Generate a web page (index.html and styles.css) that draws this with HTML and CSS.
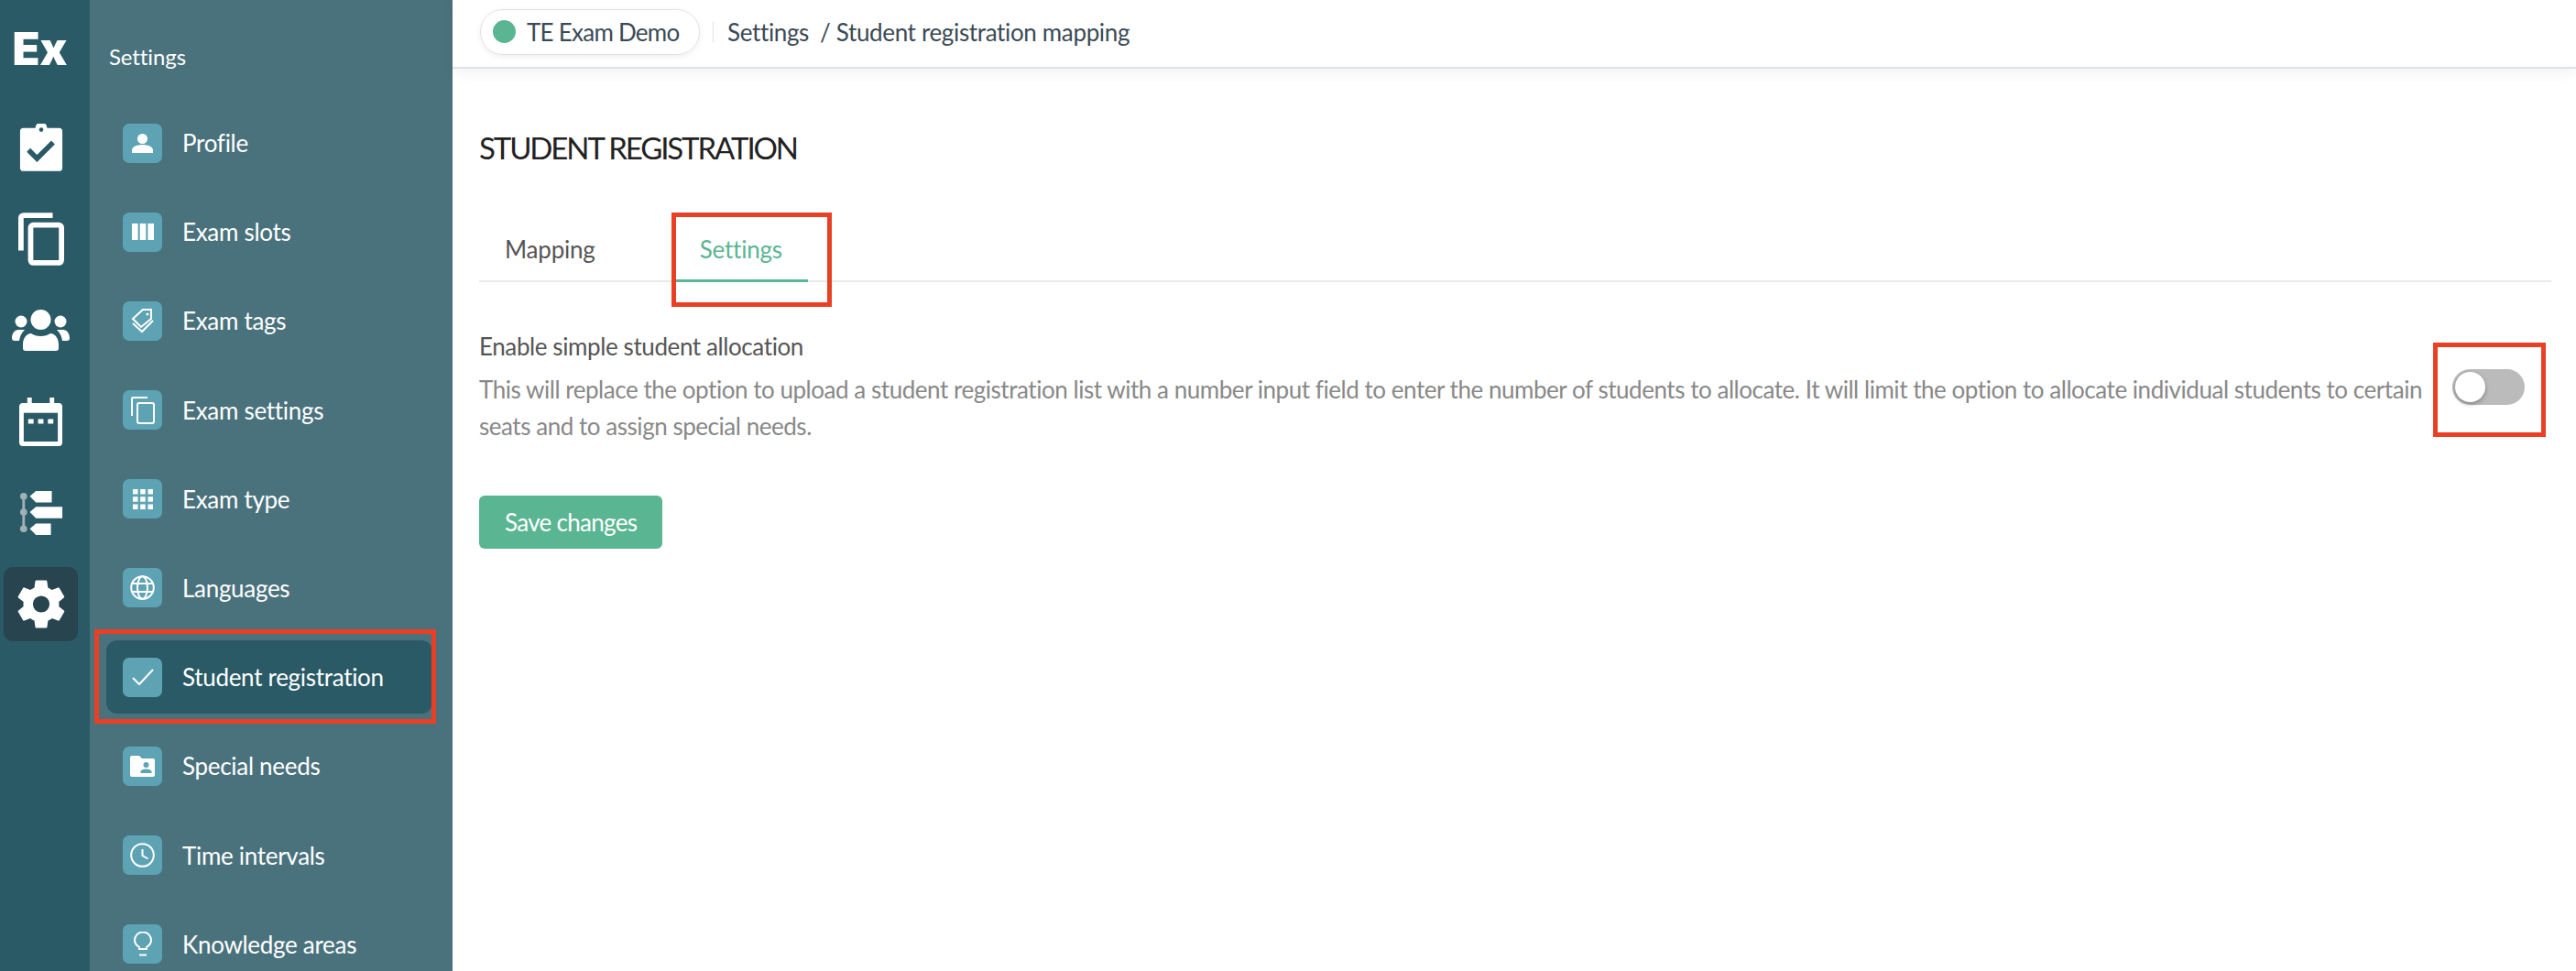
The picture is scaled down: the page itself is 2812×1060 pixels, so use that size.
FILE: index.html
```html
<!DOCTYPE html>
<html lang="en">
<head>
<meta charset="utf-8">
<title>Student registration</title>
<link rel="stylesheet" href="styles.css">
</head>
<body>
<div class="app">
  <nav class="rail">
    <div class="logo">Ex</div>
    <a class="rail-item"><svg width="48" height="52" viewBox="0 0 52 56"><path fill="#fff" d="M5 5h14a7 7 0 0 1 14 0h14a4 4 0 0 1 4 4v43a4 4 0 0 1-4 4H5a4 4 0 0 1-4-4V9a4 4 0 0 1 4-4z"/><circle cx="26" cy="7" r="2.5" fill="#2a5a66"/><path fill="none" stroke="#2a5a66" stroke-width="6" d="M11 31l10 10 19-19"/></svg></a>
    <a class="rail-item"><svg width="50" height="58" viewBox="0 0 52 60"><path fill="none" stroke="#fff" stroke-width="6" d="M3 43V6a3 3 0 0 1 3-3h33"/><rect x="14" y="14" width="35" height="43" rx="3" fill="none" stroke="#fff" stroke-width="6"/></svg></a>
    <a class="rail-item"><svg width="63" height="45" viewBox="0 0 63 45"><circle cx="31.500" cy="11" r="11" fill="#fff"/><circle cx="10" cy="13" r="6.500" fill="#fff"/><circle cx="53" cy="13" r="6.500" fill="#fff"/><path fill="#fff" d="M12 38c0-7 4-12 9-12 3 2 6 3 10.500 3s7.500-1 10.500-3c5 0 9 5 9 12v4a3 3 0 0 1-3 3H15a3 3 0 0 1-3-3z"/><path fill="#fff" d="M0 31c0-5 3-9 7-9h7c-3 3-5 6-6 12H3a3 3 0 0 1-3-3zM63 31c0-5-3-9-7-9h-7c3 3 5 6 6 12h5a3 3 0 0 0 3-3z"/></svg></a>
    <a class="rail-item"><svg width="47" height="53" viewBox="0 0 48 54"><path fill="#fff" d="M9 0h5v6h20V0h5v6h5a4 4 0 0 1 4 4v40a4 4 0 0 1-4 4H4a4 4 0 0 1-4-4V10a4 4 0 0 1 4-4h5z"/><rect x="5" y="17" width="38" height="32" fill="#2a5a66"/><path fill="#fff" d="M10 24h6v5h-6zM21 24h6v5h-6zM32 24h6v5h-6z"/></svg></a>
    <a class="rail-item"><svg width="48" height="50" viewBox="0 0 50 52"><path stroke="#9fb0b7" stroke-width="3" d="M5 6v40"/><circle cx="5" cy="7" r="4" fill="#9fb0b7"/><circle cx="5" cy="25" r="4" fill="#9fb0b7"/><circle cx="5" cy="44" r="4" fill="#9fb0b7"/><path fill="#fff" d="M12 7l7-6h18v13H19zM12 25l7-6h30v13H19zM12 44l7-6h17v13H19z"/></svg></a>
    <a class="rail-item rail-active"><svg width="52" height="53" viewBox="2 2 20 20"><path fill="#fff" d="M19.4 13c.04-.33.1-.66.1-1s-.06-.67-.1-1l2.1-1.65c.2-.15.25-.42.13-.64l-2-3.46c-.12-.22-.4-.3-.6-.22l-2.5 1c-.52-.4-1.08-.73-1.7-.98L14.45 2.400A.5.5 0 0 0 14 2h-4a.5.5 0 0 0-.5.42l-.38 2.65c-.6.25-1.17.58-1.7.98l-2.48-1c-.22-.08-.49 0-.61.22l-2 3.46c-.13.22-.07.49.12.64L4.56 11c-.04.33-.06.66-.06 1s.02.67.06 1l-2.11 1.65c-.19.15-.25.42-.12.64l2 3.46c.12.22.39.3.61.22l2.49-1c.52.4 1.08.73 1.69.98l.38 2.65c.03.24.24.42.49.42h4c.25 0 .46-.18.5-.42l.37-2.65c.62-.25 1.18-.58 1.7-.98l2.49 1c.22.08.49 0 .61-.22l2-3.46c.12-.22.07-.49-.12-.64L19.4 13zM12 15.500a3.500 3.500 0 1 1 0-7 3.500 3.500 0 0 1 0 7z"/></svg></a>
  </nav>
  <aside class="panel">
    <div class="panel-title">Settings</div>
    <ul class="menu">
      <li class="menu-item"><span class="menu-icon"><svg width="23" height="21" viewBox="0 0 23 21"><circle cx="11.500" cy="5.500" r="5.500" fill="#fff"/><path fill="#fff" d="M0 21v-3c0-4 6-6 11.500-6S23 14 23 18v3z"/></svg></span>Profile</li>
      <li class="menu-item"><span class="menu-icon"><svg width="24" height="18" viewBox="0 0 24 18"><path fill="#fff" d="M0 0h6.600v18H0zM8.700 0h6.600v18H8.700zM17.400 0H24v18h-6.600z"/></svg></span>Exam slots</li>
      <li class="menu-item"><span class="menu-icon"><svg width="25" height="28" viewBox="0 0 25 28"><path fill="none" stroke="#fff" stroke-width="2" d="M2 12L13 2h9v10L11 21z"/><circle cx="18" cy="7" r="1.500" fill="#fff"/><path fill="none" stroke="#fff" stroke-width="2" d="M2 17l10 9 12-12"/></svg></span>Exam tags</li>
      <li class="menu-item"><span class="menu-icon"><svg width="26" height="30" viewBox="0 0 26 30"><path fill="none" stroke="#fff" stroke-width="2" d="M1 21V2a1 1 0 0 1 1-1h16"/><rect x="7" y="7" width="18" height="22" rx="2" fill="none" stroke="#fff" stroke-width="2"/></svg></span>Exam settings</li>
      <li class="menu-item"><span class="menu-icon"><svg width="22" height="22" viewBox="0 0 22 22"><path fill="#fff" d="M0 0h5.500v5.500H0zM8.200 0h5.500v5.500H8.200zM16.500 0H22v5.500h-5.500zM0 8.200h5.500v5.500H0zM8.200 8.200h5.500v5.500H8.200zM16.500 8.200H22v5.500h-5.500zM0 16.500h5.500V22H0zM8.200 16.500h5.500V22H8.200zM16.500 16.500H22V22h-5.500z"/></svg></span>Exam type</li>
      <li class="menu-item"><span class="menu-icon"><svg width="27" height="27" viewBox="0 0 27 27" fill="none" stroke="#fff" stroke-width="2"><circle cx="13.500" cy="13.500" r="12.300"/><ellipse cx="13.500" cy="13.500" rx="5.500" ry="12.300"/><path d="M2 9h23M2 18h23"/></svg></span>Languages</li>
      <li class="menu-item menu-active"><span class="menu-icon"><svg width="24" height="18" viewBox="0 0 24 18"><path fill="none" stroke="#fff" stroke-width="2" d="M1 10l7 7L23 1"/></svg></span>Student registration</li>
      <li class="menu-item"><span class="menu-icon"><svg width="27" height="23" viewBox="0 0 27 23"><path fill="#fff" d="M2 0h8l3 3h12a2 2 0 0 1 2 2v16a2 2 0 0 1-2 2H2a2 2 0 0 1-2-2V2a2 2 0 0 1 2-2z"/><circle cx="17.500" cy="10" r="3" fill="#5ea3b3"/><path fill="#5ea3b3" d="M11.500 19v-1.500c0-2 3-3 6-3s6 1 6 3V19z"/></svg></span>Special needs</li>
      <li class="menu-item"><span class="menu-icon"><svg width="27" height="27" viewBox="0 0 27 27" fill="none" stroke="#fff" stroke-width="2"><circle cx="13.500" cy="13.500" r="12.300"/><path d="M13.500 7v7l6 3.500"/></svg></span>Time intervals</li>
      <li class="menu-item"><span class="menu-icon"><svg width="20" height="27" viewBox="0 0 20 27" fill="none" stroke="#fff" stroke-width="2"><path d="M6 19v-2c-3-2-5-4-5-7.500a9 9 0 0 1 18 0c0 3.500-2 5.500-5 7.500v2z"/><path d="M6 25.500h8"/></svg></span>Knowledge areas</li>
    </ul>
  </aside>
  <main class="main">
    <header class="topbar">
      <div class="pill"><span class="dot"></span>TE Exam Demo</div>
      <span class="vsep"></span>
      <div class="crumbs"><span>Settings</span><span>/ Student registration mapping</span></div>
    </header>
    <section class="content">
      <h1 class="title">STUDENT REGISTRATION</h1>
      <div class="tabs">
        <div class="tab">Mapping</div>
        <div class="tab tab-active">Settings</div>
      </div>
      <div class="option">
        <div class="option-text">
          <div class="option-label">Enable simple student allocation</div>
          <p class="option-desc">This will replace the option to upload a student registration list with a number input field to enter the number of students to allocate. It will limit the option to allocate individual students to certain seats and to assign special needs.</p>
        </div>
        <div class="toggle"><span class="knob"></span></div>
      </div>
      <button class="save">Save changes</button>
    </section>
  </main>
</div>
<div class="mark mark-menu"></div>
<div class="mark mark-tab"></div>
<div class="mark mark-toggle"></div>
</body>
</html>
```
FILE: styles.css
```css
* { box-sizing: border-box; }
html, body { margin: 0; height: 100%; }
body { font-family: Lato, "Open Sans", sans-serif; background: #fff; overflow: hidden; position: relative; }
.app { display: flex; height: 1060px; overflow: hidden; }

.rail { width: 98px; flex: none; background: #2a5a66; display: flex; flex-direction: column; align-items: center; padding: 27px 9px 0 0; gap: 18.6px; }
.logo { height: 54px; margin: 0 2px 21.4px 0; font: 900 49px/54px Inter, Lato, sans-serif; color: #fff; }
.rail-item { width: 81px; height: 81px; flex: none; display: flex; align-items: center; justify-content: center; border-radius: 10px; }
.rail-active { background: #27444f; }

.panel { width: 396px; flex: none; background: #4a727d; color: #fff; padding-left: 22px; }
.panel-title { font-size: 24px; line-height: 30px; padding-top: 47px; height: 116px; margin-left: -1px; letter-spacing: -0.1px; }
.menu { list-style: none; margin: 0 22px 0 -4px; padding: 0; display: flex; flex-direction: column; gap: 17.2px; }
.menu-item { height: 80px; flex: none; display: flex; align-items: center; gap: 22px; padding-left: 18px; font-size: 26px; letter-spacing: -0.3px; border-radius: 12px; white-space: nowrap; }
.menu-active { background: #2a5a66; }
.menu-icon { width: 43px; height: 43px; flex: none; border-radius: 7px; background: #5ea3b3; display: flex; align-items: center; justify-content: center; }

.main { flex: 1; min-width: 0; }
.topbar { height: 75px; border-bottom: 2px solid #dde3e8; box-shadow: 0 5px 14px rgba(0,0,0,.05); display: flex; align-items: center; padding: 0 0 4px 30px; color: #3a4a55; font-size: 26px; }
.pill { width: 240px; height: 50px; flex: none; border: 1px solid #dfe3e4; border-radius: 25px; box-shadow: 0 2px 6px rgba(0,0,0,.07); display: flex; align-items: center; gap: 12px; padding-left: 13px; letter-spacing: -0.75px; white-space: nowrap; }
.dot { width: 25px; height: 25px; border-radius: 50%; background: #5ab592; flex: none; }
.vsep { width: 1px; height: 24px; background: #e0e3e4; margin: 0 15px 0 14px; flex: none; }
.crumbs { display: flex; gap: 12px; white-space: nowrap; letter-spacing: -0.35px; }

.content { padding: 0 27px 0 29px; }
.title { margin: 0; padding-top: 66px; font-size: 33px; line-height: 40px; font-weight: 400; color: #222; letter-spacing: -2.1px; }
.tabs { display: flex; gap: 58px; margin-top: 60px; border-bottom: 2px solid #e8eaea; height: 67px; }
.tab { padding: 0 28px; height: 67px; flex: none; line-height: 62px; font-size: 26px; color: #555; letter-spacing: -0.2px; }
.tab-active { color: #5ab592; border-bottom: 3px solid #5ab592; }

.option { display: flex; align-items: center; margin-top: 52px; }
.option-text { width: 2135px; flex: none; }
.option-label { font-size: 26px; line-height: 36px; color: #555; letter-spacing: -0.4px; }
.option-desc { margin: 9px 0 0; font-size: 26px; line-height: 40px; color: #888; letter-spacing: -0.46px; }
.toggle { margin-left: 19px; width: 79px; height: 39px; flex: none; border-radius: 20px; background: #bbb; position: relative; }
.knob { position: absolute; left: 3px; top: 3px; width: 33px; height: 33px; border-radius: 50%; background: #fff; box-shadow: 0 2px 5px rgba(0,0,0,.3); }
.save { display: block; margin-top: 56px; padding: 0 28px; height: 58px; background: #5ab592; color: #fff; border: 0; border-radius: 6px; font: 26px Lato, sans-serif; letter-spacing: -0.7px; white-space: nowrap; }

.mark { position: absolute; border: 5px solid #e94025; pointer-events: none; }
.mark-menu { left: 103px; top: 687px; width: 373px; height: 103px; }
.mark-tab { left: 733px; top: 232px; width: 175px; height: 103px; }
.mark-toggle { left: 2656px; top: 374px; width: 123px; height: 103px; }
```
